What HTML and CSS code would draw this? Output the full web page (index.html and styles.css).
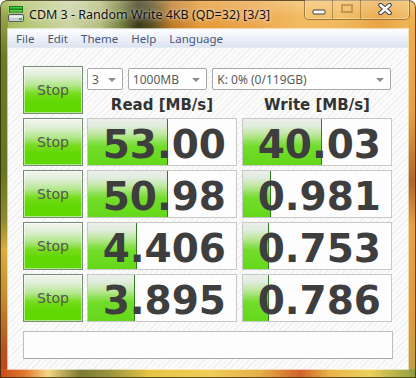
FILE: index.html
```html
<!DOCTYPE html>
<html lang="en">
<head>
    <meta charset="UTF-8">
    <meta name="viewport" content="width=device-width, initial-scale=1.0">
    <title>CDM 3 - Random Write 4KB (QD=32) [3/3]</title>
    <link rel="stylesheet" href="styles.css">
</head>
<body>
    <div class="window">
        <div class="titlebar">
            <svg class="app-icon" width="16" height="16" viewBox="0 0 16 16">
                <rect x="1.5" y="0.5" width="13" height="2.5" fill="#3ccf3c" stroke="#1e7a1e"/>
                <rect x="1.5" y="3.5" width="13" height="2.5" fill="#5ade4a" stroke="#1e7a1e"/>
                <rect x="0.5" y="8.5" width="15" height="7" rx="1.5" fill="#c9ccd0" stroke="#555b63"/>
                <rect x="1.5" y="9.5" width="13" height="2" fill="#eef0f2"/>
                <rect x="11" y="12" width="3" height="2" fill="#2fbf2f"/>
            </svg>
            <span class="title">CDM 3 - Random Write 4KB (QD=32) [3/3]</span>
            <div class="caption-buttons">
                <div class="cap-btn cap-min">
                    <svg width="14" height="6" viewBox="0 0 14 6"><rect x="1" y="1" width="12" height="4" rx="1" fill="#fff" stroke="#3b4150"/></svg>
                </div>
                <div class="cap-btn cap-max">
                    <svg width="12" height="9" viewBox="0 0 12 9"><rect x="1" y="1" width="10" height="7" fill="none" stroke="rgba(150,90,40,0.45)" stroke-width="2"/></svg>
                </div>
                <div class="cap-btn cap-close">
                    <svg width="14" height="12" viewBox="0 0 14 12"><path d="M2.5 2 L11.5 10 M11.5 2 L2.5 10" stroke="#3b4150" stroke-width="4.5" stroke-linecap="round"/><path d="M2.5 2 L11.5 10 M11.5 2 L2.5 10" stroke="#fff" stroke-width="2.5" stroke-linecap="round"/></svg>
                </div>
            </div>
        </div>

        <div class="client">
            <div class="menubar">
                <span>File</span>
                <span>Edit</span>
                <span>Theme</span>
                <span>Help</span>
                <span>Language</span>
            </div>

            <div class="panel">
                <div class="grid">
                    <button class="stop-btn">Stop</button>
                    <div class="controls">
                        <div class="selects">
                            <div class="select sel-count"><span>3</span><span class="arrow"></span></div>
                            <div class="select sel-size"><span>1000MB</span><span class="arrow"></span></div>
                            <div class="select sel-drive"><span>K: 0% (0/119GB)</span><span class="arrow"></span></div>
                        </div>
                        <div class="headers">
                            <div class="head">Read [MB/s]</div>
                            <div class="head">Write [MB/s]</div>
                        </div>
                    </div>

                    <button class="stop-btn">Stop</button>
                    <div class="cell"><div class="bar" style="width: 80px"></div><span class="value">53.00</span></div>
                    <div class="cell write"><div class="bar" style="width: 79px"></div><span class="value">40.03</span></div>

                    <button class="stop-btn">Stop</button>
                    <div class="cell"><div class="bar" style="width: 80px"></div><span class="value">50.98</span></div>
                    <div class="cell write"><div class="bar" style="width: 28px"></div><span class="value">0.981</span></div>

                    <button class="stop-btn">Stop</button>
                    <div class="cell"><div class="bar" style="width: 49px"></div><span class="value">4.406</span></div>
                    <div class="cell write"><div class="bar" style="width: 26px"></div><span class="value">0.753</span></div>

                    <button class="stop-btn">Stop</button>
                    <div class="cell"><div class="bar" style="width: 47px"></div><span class="value">3.895</span></div>
                    <div class="cell write"><div class="bar" style="width: 26px"></div><span class="value">0.786</span></div>
                </div>
                <div class="status"></div>
            </div>
        </div>
    </div>
</body>
</html>
```

FILE: styles.css
```css
html, body {
    margin: 0;
    padding: 0;
}
body {
    font-family: "Noto Sans", sans-serif;
    width: 416px;
    height: 378px;
    overflow: hidden;
}
.window {
    width: 416px;
    height: 378px;
    box-sizing: border-box;
    padding: 0 8px 9px;
    display: flex;
    flex-direction: column;
    border-radius: 7px 7px 0 0;
    box-shadow: inset 0 0 0 1px rgba(40, 30, 10, 0.7);
    background:
        linear-gradient(to bottom, rgba(255, 255, 255, 0.25), rgba(255, 255, 255, 0) 60%) top / 100% 29px no-repeat,
        linear-gradient(to right, #c84a18 0, #e07a30 25px, #f2d684 48px, #7c7a34 80px, #9a9440 110px, #e8c444 150px, #f0cc58 210px, #e6b048 260px, #d0622a 300px, #e8b448 330px, #ecd05a 370px, #8e9c40 416px) bottom / 100% 9px no-repeat,
        linear-gradient(to bottom, #a6b45a 0, #6c7c24 15%, #66761e 45%, #8c8a30 58%, #dcae3c 66%, #c68e2e 78%, #b45420 92%, #c8401a 100%) left / 8px 100% no-repeat,
        linear-gradient(to bottom, #f0b252 0, #e2a242 30%, #b06628 48%, #e6a444 60%, #dc9c3a 85%, #b8a244 100%) right / 8px 100% no-repeat,
        linear-gradient(to right, #9fb650 0, #b8c878 30px, #cdd5a6 70px, #b6bf80 100px, #7a8440 120px, #3c3a1a 138px, #5c5024 152px, #c07a28 172px, #e39a38 200px, #eba54a 250px, #f2bb60 300px, #f0ba5e 340px, #e9a444 380px, #f0bc5c 416px);
}

/* title bar */
.titlebar {
    height: 29px;
    display: flex;
    align-items: center;
    flex-shrink: 0;
}
.app-icon {
    margin-right: 5px;
    margin-top: -1px;
}
.title {
    font-size: 12.5px;
    color: #111;
    text-shadow: 0 0 7px rgba(255, 255, 255, 0.8), 0 0 3px rgba(255, 255, 255, 0.6);
    white-space: nowrap;
}
.caption-buttons {
    margin-left: auto;
    margin-right: -2px;
    align-self: flex-start;
    height: 19px;
    display: flex;
    border: 1px solid rgba(90, 60, 20, 0.55);
    border-top: none;
    border-radius: 0 0 5px 5px;
    box-shadow: inset 0 0 0 1px rgba(255, 240, 210, 0.45);
    background: rgba(255, 235, 190, 0.12);
}
.cap-btn {
    display: flex;
    align-items: center;
    justify-content: center;
    border-left: 1px solid rgba(90, 60, 20, 0.4);
}
.cap-btn:first-child {
    border-left: none;
}
.cap-min {
    width: 27px;
    padding-top: 4px;
}
.cap-max {
    width: 27px;
    padding-bottom: 2px;
}
.cap-close {
    width: 48px;
    padding-bottom: 1px;
}

/* client area */
.client {
    flex: 1;
    display: flex;
    flex-direction: column;
    border-top: 1px solid #f4f6fa;
    box-shadow: 0 0 0 1px rgba(255, 255, 255, 0.6);
}
.menubar {
    height: 18px;
    display: flex;
    align-items: center;
    gap: 13px;
    padding-left: 8px;
    font-size: 11.5px;
    color: #4a5776;
    background: linear-gradient(to bottom, #fcfdfe, #e9eef7 60%, #dde4f1);
    border-bottom: 1px solid #e6eaf1;
    box-sizing: border-box;
}
.panel {
    flex: 1;
    padding: 18px 0 0 15px;
    background: repeating-linear-gradient(135deg, #fbfbfb 0, #fbfbfb 3px, #efefef 3px, #efefef 4px);
}
.grid {
    display: grid;
    grid-template-columns: 60px 150px 150px;
    grid-auto-rows: 48px;
    column-gap: 4px;
    row-gap: 4px;
}
.stop-btn {
    margin: 0;
    padding: 0;
    font-family: "DejaVu Sans", sans-serif;
    font-size: 14px;
    color: #555;
    border: 1px solid #7b897b;
    box-shadow: inset 0 0 0 1px rgba(255, 255, 255, 0.5);
    background: linear-gradient(to bottom, #f2f5f0 0%, #e0efd8 18%, #b2e78c 40%, #76dc1c 58%, #62d804 75%, #5ed800 100%);
    cursor: pointer;
}
.controls {
    grid-column: 2 / 4;
    display: flex;
    flex-direction: column;
    padding-top: 2px;
}
.selects {
    display: flex;
    gap: 5px;
}
.select {
    height: 22px;
    box-sizing: border-box;
    display: flex;
    align-items: center;
    justify-content: space-between;
    padding: 0 6px 0 4px;
    background: #fff;
    border: 1px solid #a9a9a9;
    border-radius: 2px;
    font-size: 12px;
    color: #5a5a5a;
}
.sel-count {
    width: 36px;
}
.sel-size {
    width: 80px;
}
.sel-drive {
    width: 180px;
}
.arrow {
    width: 0;
    height: 0;
    border-left: 4px solid transparent;
    border-right: 4px solid transparent;
    border-top: 4px solid #8a8a8a;
    margin-top: 1px;
}
.headers {
    margin-top: auto;
    display: grid;
    grid-template-columns: 150px 150px;
    column-gap: 5px;
}
.head {
    text-align: center;
    font-family: "DejaVu Sans", sans-serif;
    font-weight: bold;
    font-size: 15px;
    color: #333;
}
.cell {
    position: relative;
    display: flex;
    align-items: center;
    justify-content: flex-end;
    padding: 4px 10px 0 0;
    background: #fdfdfd;
    border: 1px solid #c8c8c8;
    overflow: hidden;
}
.cell.write {
    margin-left: 1px;
    width: 150px;
    box-sizing: border-box;
}
.bar {
    position: absolute;
    left: 0;
    top: 0;
    bottom: 0;
    box-sizing: border-box;
    border-right: 1px solid #2f7d1f;
    background: linear-gradient(to bottom, #eceeea 0%, #e2ece0 14%, #bde79c 34%, #8ae050 50%, #72dc2a 60%, #64d81a 100%);
}
.value {
    position: relative;
    font-family: "DejaVu Sans", sans-serif;
    font-weight: bold;
    font-size: 39px;
    color: #3e3e3e;
}
.status {
    margin-top: 9px;
    width: 370px;
    height: 28px;
    box-sizing: border-box;
    background: #fdfdfd;
    border: 1px solid #bdbdbd;
    border-bottom-color: #a8a8a8;
}
```
